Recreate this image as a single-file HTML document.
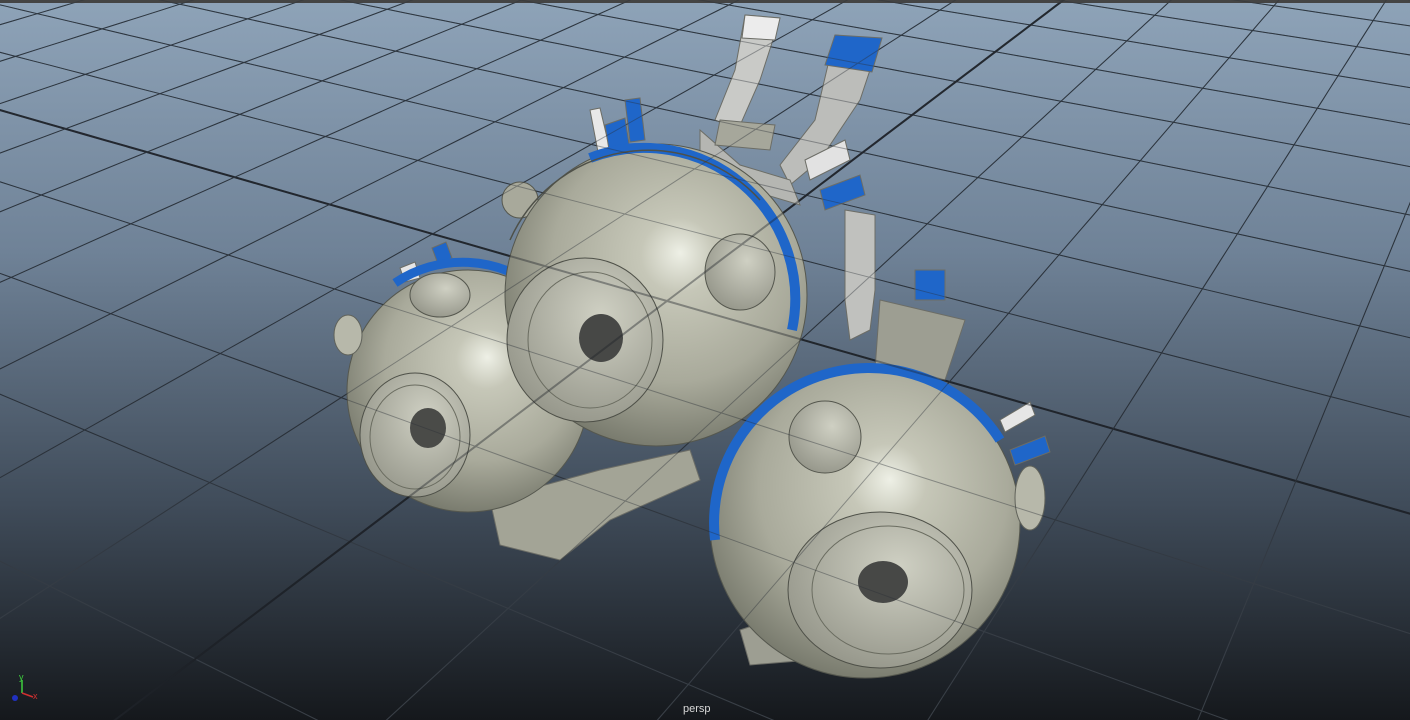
<!DOCTYPE html>
<html><head><meta charset="utf-8"><style>
html,body{margin:0;padding:0;width:1410px;height:720px;overflow:hidden;background:#1b1e23}
#v{position:absolute;left:0;top:0;width:1410px;height:720px}
.lbl{position:absolute;left:683px;top:703px;font:11px/12px "Liberation Sans",sans-serif;color:#d8d8d8}
</style></head><body>
<svg id="v" width="1410" height="720" viewBox="0 0 1410 720" xmlns="http://www.w3.org/2000/svg">
<defs>
<linearGradient id="bg" x1="0" y1="0" x2="0" y2="1">
<stop offset="0" stop-color="#8ea3b8"/><stop offset="0.35" stop-color="#6f8297"/>
<stop offset="0.7" stop-color="#404c5a"/><stop offset="1" stop-color="#15181c"/></linearGradient>
<linearGradient id="gl" gradientUnits="userSpaceOnUse" x1="0" y1="0" x2="0" y2="720">
<stop offset="0" stop-color="#26303a"/><stop offset="0.6" stop-color="#262d35"/>
<stop offset="0.8" stop-color="#3e4650"/><stop offset="1" stop-color="#4a5159"/></linearGradient>
<radialGradient id="sph" cx="0.55" cy="0.4" r="0.62" fx="0.58" fy="0.36">
<stop offset="0" stop-color="#eef0e6"/><stop offset="0.2" stop-color="#c6c7b8"/>
<stop offset="0.65" stop-color="#a9aa9b"/><stop offset="1" stop-color="#77796c"/></radialGradient>
<radialGradient id="disk" cx="0.6" cy="0.35" r="0.7">
<stop offset="0" stop-color="#cfd0c3"/><stop offset="1" stop-color="#95968a"/></radialGradient>
</defs>
<rect width="1410" height="720" fill="url(#bg)"/>
<g id="grid" stroke="url(#gl)" stroke-width="1" fill="none" opacity="0.9"></g>
<rect x="0" y="0" width="1410" height="3" fill="#444"/>

<g stroke="#6c6d66" stroke-width="1">
<path d="M745 15 L780 18 L760 80 L738 130 L715 120 L735 70 Z" fill="#c9cac7"/>
<path d="M745 15 L780 18 L775 40 L742 38 Z" fill="#ececec"/>
<path d="M835 35 L880 40 L860 100 L820 160 L790 185 L780 165 L815 120 Z" fill="#bcbdba"/>
<path d="M835 35 L882 38 L872 72 L825 65 Z" fill="#1f66c9"/>
<path d="M700 130 L740 165 L790 180 L800 205 L750 190 L700 160 Z" fill="#b5b6b2"/>
<path d="M845 210 L875 215 L875 290 L870 330 L850 340 L845 300 Z" fill="#c0c1be"/>
<path d="M915 270 L945 270 L945 300 L915 300 Z" fill="#1f66c9"/>
<path d="M880 300 L965 320 L945 380 L875 370 Z" fill="#9d9e92"/>
<path d="M590 110 L600 108 L610 150 L598 152 Z" fill="#e8e8e8"/>
<path d="M625 100 L640 98 L645 140 L630 142 Z" fill="#1f66c9"/>
<path d="M605 125 L625 118 L630 150 L610 156 Z" fill="#1f66c9"/>
<path d="M720 120 L775 125 L770 150 L715 145 Z" fill="#a6a79b"/>
<path d="M805 160 L845 140 L850 160 L810 180 Z" fill="#e2e2e2"/>
<path d="M820 190 L860 175 L865 195 L825 210 Z" fill="#1f66c9"/>
<path d="M400 268 L415 262 L420 278 L405 282 Z" fill="#e6e6e6"/>
<path d="M432 248 L446 242 L452 258 L438 264 Z" fill="#1f66c9"/>
<path d="M490 500 L600 470 L690 450 L700 480 L610 520 L560 560 L500 545 Z" fill="#a3a496"/>
<path d="M740 630 L800 610 L810 660 L750 665 Z" fill="#9d9e92"/>
</g>

<circle cx="468" cy="391" r="121" fill="url(#sph)" stroke="#55574e" stroke-width="1"/>
<path d="M395 283 A121 121 0 0 1 540 290" stroke="#1f66c9" stroke-width="9" fill="none"/>
<ellipse cx="348" cy="335" rx="14" ry="20" fill="#b7b8aa" stroke="#60625a"/>
<ellipse cx="440" cy="295" rx="30" ry="22" fill="url(#disk)" stroke="#55574e"/>
<ellipse cx="415" cy="435" rx="55" ry="62" fill="url(#disk)" stroke="#4e5048"/>
<ellipse cx="415" cy="437" rx="45" ry="52" fill="none" stroke="#6a6c60"/>
<ellipse cx="428" cy="428" rx="18" ry="20" fill="#4a4b48"/>

<circle cx="520" cy="200" r="18" fill="#a8a99b" stroke="#55574e"/>
<circle cx="656" cy="295" r="151" fill="url(#sph)" stroke="#55574e" stroke-width="1"/>
<path d="M590 158 A151 151 0 0 1 792 330" stroke="#1f66c9" stroke-width="10" fill="none"/>
<path d="M510 240 A151 151 0 0 1 760 200" stroke="#4e5048" stroke-width="1.5" fill="none"/>
<ellipse cx="740" cy="272" rx="35" ry="38" fill="url(#disk)" stroke="#55574e"/>
<ellipse cx="585" cy="340" rx="78" ry="82" fill="url(#disk)" stroke="#4e5048"/>
<ellipse cx="590" cy="340" rx="62" ry="68" fill="none" stroke="#6a6c60"/>
<ellipse cx="601" cy="338" rx="22" ry="24" fill="#474846"/>

<circle cx="865" cy="523" r="155" fill="url(#sph)" stroke="#55574e" stroke-width="1"/>
<path d="M715 540 A155 155 0 0 1 1000 440" stroke="#1f66c9" stroke-width="10" fill="none"/>
<path d="M1000 420 L1030 402 L1035 415 L1005 432 Z" fill="#e6e6e6" stroke="#6c6d66"/>
<path d="M1010 450 L1045 436 L1050 452 L1015 465 Z" fill="#1f66c9" stroke="#6c6d66"/>
<ellipse cx="1030" cy="498" rx="15" ry="32" fill="#b7b8aa" stroke="#60625a"/>
<ellipse cx="825" cy="437" rx="36" ry="36" fill="url(#disk)" stroke="#55574e"/>
<ellipse cx="880" cy="590" rx="92" ry="78" fill="url(#disk)" stroke="#4e5048"/>
<ellipse cx="888" cy="590" rx="76" ry="64" fill="none" stroke="#6a6c60"/>
<ellipse cx="883" cy="582" rx="25" ry="21" fill="#474846"/>

<g id="grid2" stroke="#2a2f36" stroke-width="1" fill="none" opacity="0.4"></g>

<line x1="22" y1="693" x2="22" y2="680" stroke="#3ecf3e" stroke-width="1.5"/>
<line x1="22" y1="693" x2="33" y2="697" stroke="#d03030" stroke-width="1.5"/>
<circle cx="15" cy="698" r="3" fill="#2030c0"/>
<text x="19" y="680" font-family="Liberation Sans" font-size="9" fill="#3ecf3e">y</text>
<text x="33" y="699" font-family="Liberation Sans" font-size="9" fill="#d03030">x</text>
</svg>
<div class="lbl">persp</div>
<script>
(function(){
var p=-0.0463,q=-0.079,Ox=667,Oy=301,VAx=-2100,VAy=-491,VBx=1688,VBy=-474;
function P(u,v){var w=1+p*u+q*v;if(w<=0.01)return null;
return [(Ox+u*p*VAx+v*q*VBx)/w,(Oy+u*p*VAy+v*q*VBy)/w];}
var NS="http://www.w3.org/2000/svg";
function draw(id,thickCol){
var G=document.getElementById(id);
function seg(fn,thick){var pts=[];for(var t=-60;t<=60;t+=0.25){var r=fn(t);if(r&&Math.abs(r[0])<8000&&Math.abs(r[1])<8000)pts.push(r[0].toFixed(1)+","+r[1].toFixed(1));}
if(pts.length<2)return;var l=document.createElementNS(NS,"polyline");l.setAttribute("points",pts.join(" "));if(thick){l.setAttribute("stroke-width","2");l.setAttribute("stroke",thickCol);}G.appendChild(l);}
for(var v=-40;v<=40;v++)seg(function(t){return P(t,v);},v==0);
for(var u=-40;u<=40;u++)seg(function(t){return P(u,t);},u==0);
}
draw("grid","#1e2228");draw("grid2","#1e2228");
})();
</script>
</body></html>
